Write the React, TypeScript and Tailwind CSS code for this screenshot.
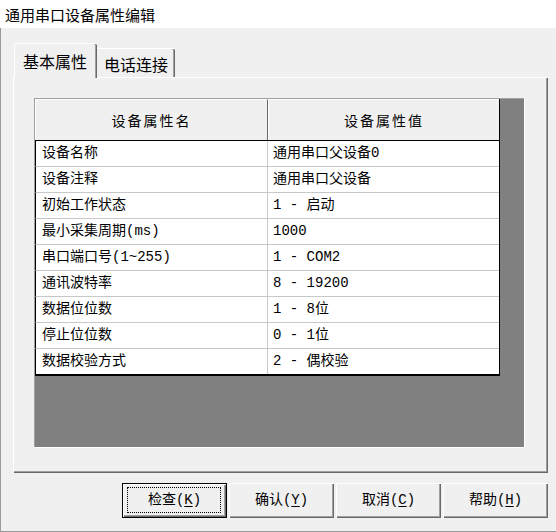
import React from "react";

const rows: [string, string][] = [
  ["设备名称", "通用串口父设备0"],
  ["设备注释", "通用串口父设备"],
  ["初始工作状态", "1 - 启动"],
  ["最小采集周期(ms)", "1000"],
  ["串口端口号(1~255)", "1 - COM2"],
  ["通讯波特率", "8 - 19200"],
  ["数据位位数", "1 - 8位"],
  ["停止位位数", "0 - 1位"],
  ["数据校验方式", "2 - 偶校验"],
];

const buttons = [
  { label: "检查", key: "K", isDefault: true },
  { label: "确认", key: "Y", isDefault: false },
  { label: "取消", key: "C", isDefault: false },
  { label: "帮助", key: "H", isDefault: false },
];

const mono = "font-['Liberation_Mono','Noto_Sans_CJK_SC',monospace]";

const App = () => {
  return (
    <div className="w-[556px] h-[532px] bg-[#f0f0f0] font-['Noto_Sans_CJK_SC',sans-serif] text-black overflow-hidden">
      {/* title */}
      <div className="h-[28px] bg-white pl-[5px] pt-[4px] text-[15px] leading-[22px]">
        通用串口设备属性编辑
      </div>

      {/* client area */}
      <div className="h-[504px] border-l border-b border-[#9a9a9a] pl-[12px] pr-[8px]">
        {/* tabs */}
        <div className="h-[49px] flex items-end">
          <div className="relative z-10 -mb-px ml-px h-[35px] w-[83px] bg-[#f0f0f0] border-l border-t border-white shadow-[inset_-1px_0_0_#696969,inset_-2px_0_0_#a0a0a0] rounded-t-[2px] flex items-center justify-center text-[16px] pr-[2px]">
            基本属性
          </div>
          <div className="h-[29px] w-[78px] border-t border-white shadow-[inset_-1px_0_0_#696969,inset_-2px_0_0_#a0a0a0] rounded-t-[2px] flex items-center justify-center text-[16px] pt-[2px]">
            电话连接
          </div>
        </div>

        {/* panel */}
        <div className="h-[396px] w-[535px] border-l border-t border-white shadow-[inset_-1px_-1px_0_#696969,inset_-2px_-2px_0_#a0a0a0] pl-[20px] pt-[20px]">
          <div className="w-[490px] h-[349px] bg-[#808080] border-l border-t border-[#a0a0a0] shadow-[1px_1px_0_#ffffff]">
            <div className={`w-[465px] border-r border-b border-black bg-white text-[14px] ${mono}`}>
              <div className="flex h-[42px] bg-[#f0f0f0] border-b border-black">
                <div className="w-[233px] h-full border-l border-t border-white border-r border-r-[#696969] flex items-center justify-center tracking-[2px] font-['Noto_Sans_CJK_SC',sans-serif]">
                  设备属性名
                </div>
                <div className="flex-1 h-full border-l border-t border-white flex items-center justify-center tracking-[2px] font-['Noto_Sans_CJK_SC',sans-serif]">
                  设备属性值
                </div>
              </div>
              {rows.map(([name, value], i) => (
                <div
                  key={name}
                  className={`flex h-[26px] border-l border-black border-b ${i === rows.length - 1 ? "border-b-black" : "border-b-[#c8c8c8]"}`}
                >
                  <div className="w-[232px] border-r border-[#c8c8c8] pl-[6px] flex items-center whitespace-pre">
                    {name}
                  </div>
                  <div className="flex-1 pl-[5px] flex items-center whitespace-pre">{value}</div>
                </div>
              ))}
            </div>
          </div>
        </div>

        {/* buttons */}
        <div className="mt-[10px] flex justify-end gap-[2px] pr-[0px]">
          {buttons.map((b) => (
            <div
              key={b.key}
              className={`relative w-[105px] h-[35px] bg-[#f0f0f0] flex items-center justify-center text-[14px] ${mono} ${
                b.isDefault
                  ? "border border-black shadow-[inset_1px_1px_0_#ffffff,inset_-1px_-1px_0_#696969,inset_-2px_-2px_0_#a0a0a0]"
                  : "shadow-[inset_1px_1px_0_#ffffff,inset_-1px_-1px_0_#696969,inset_-2px_-2px_0_#a0a0a0]"
              }`}
            >
              {b.isDefault && (
                <div className="absolute left-[4px] right-[5px] top-[3px] bottom-[4px] border border-dotted border-black" />
              )}
              <span>
                {b.label}(<span className="underline underline-offset-2">{b.key}</span>)
              </span>
            </div>
          ))}
        </div>
      </div>
    </div>
  );
};

export default App;
